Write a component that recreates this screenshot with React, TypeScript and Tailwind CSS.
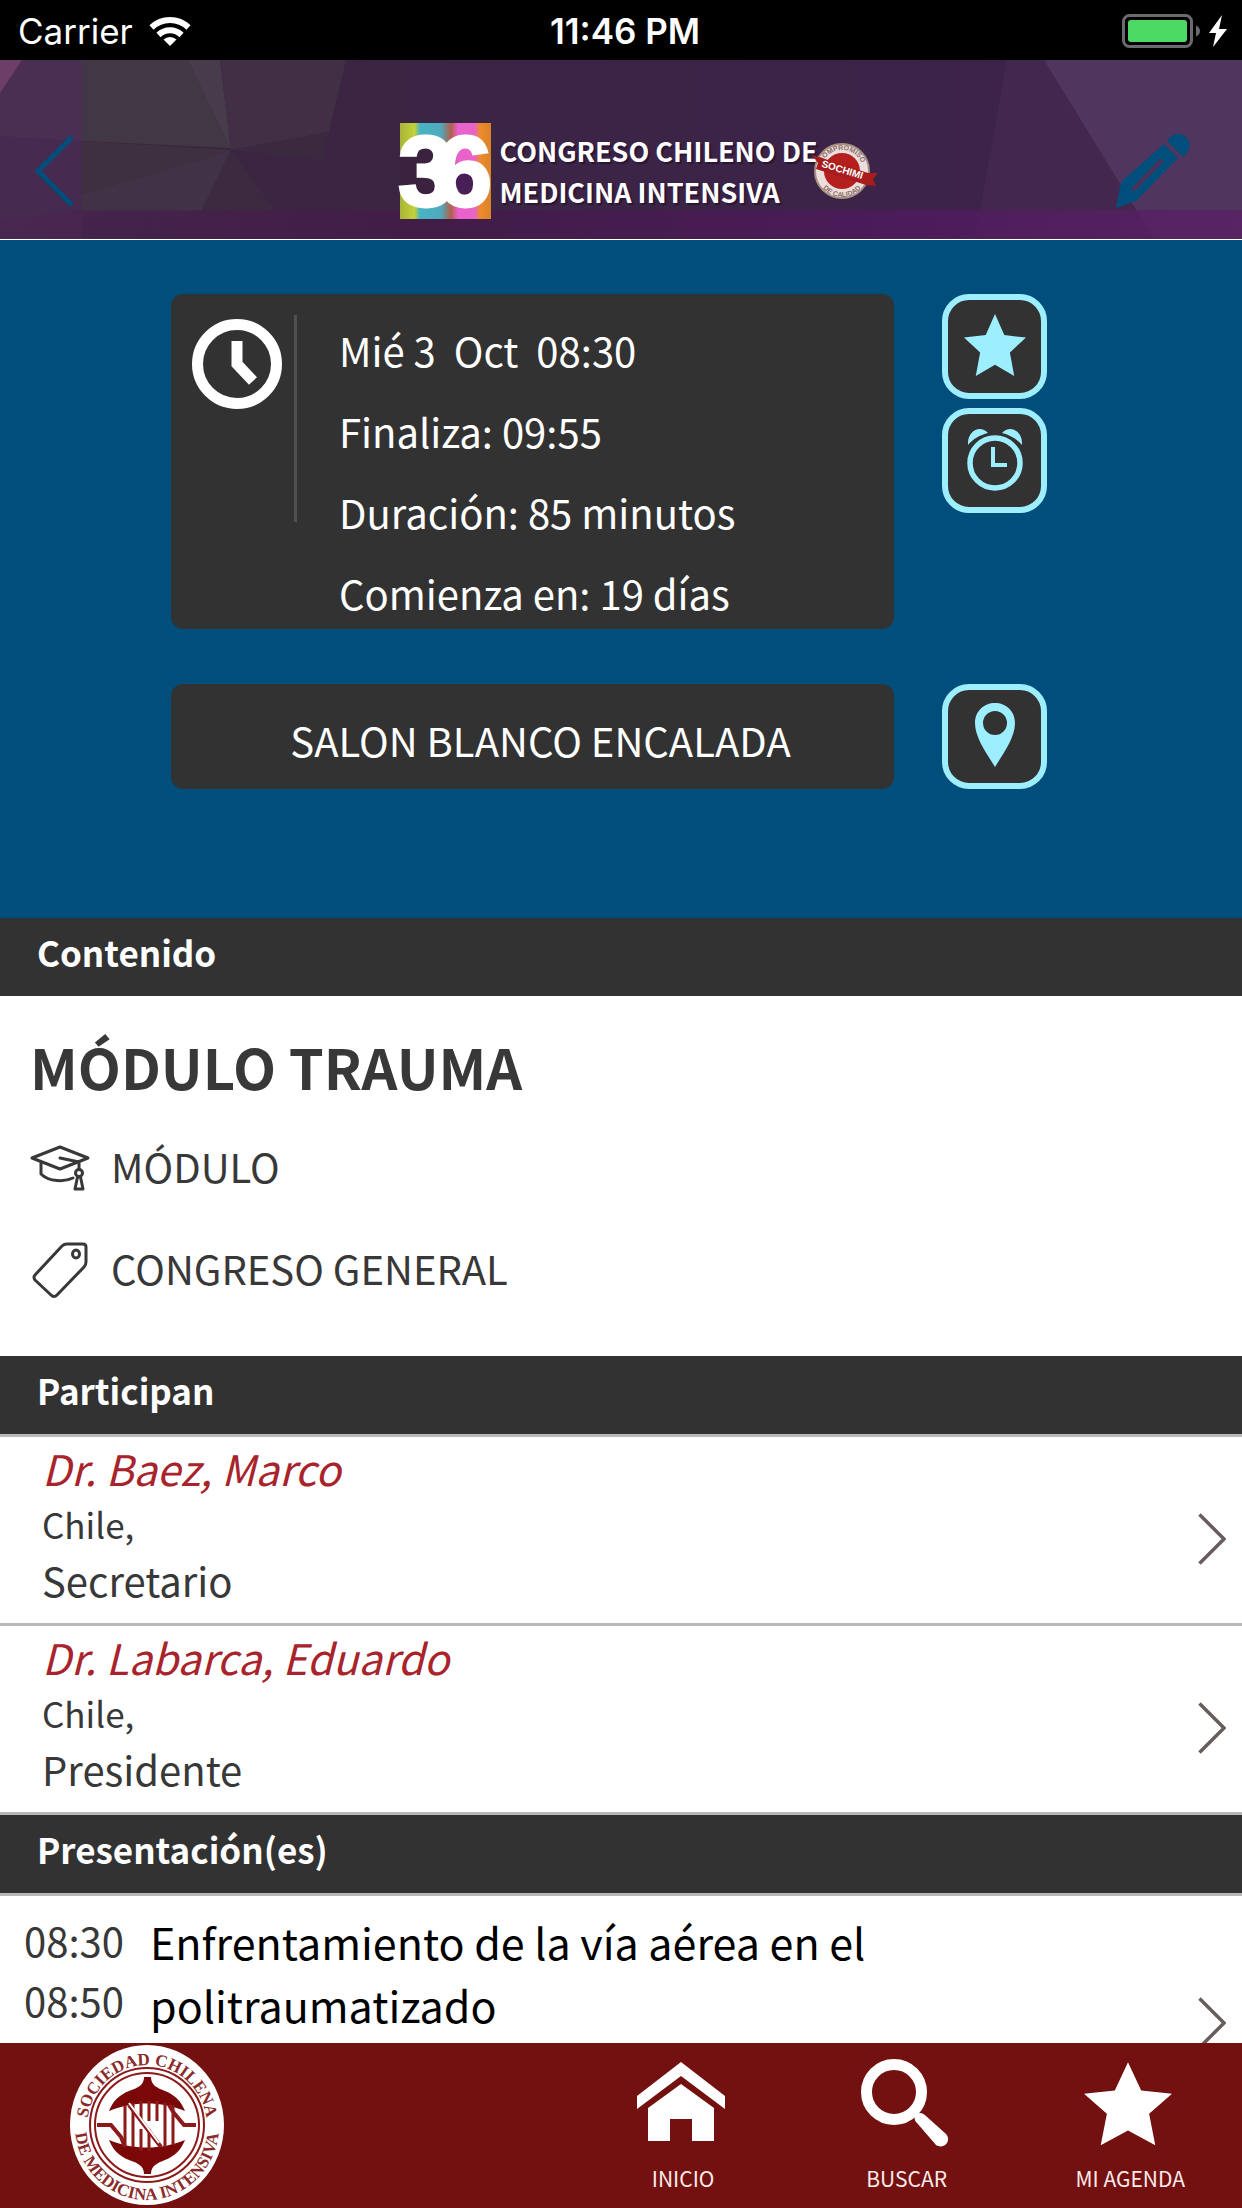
import type { ReactNode } from "react";

const participants = [
  { name: "Dr. Baez, Marco", country: "Chile,", role: "Secretario" },
  { name: "Dr. Labarca, Eduardo", country: "Chile,", role: "Presidente" },
];

const STAR = "50,0 65,34 100,38 74,62 81,100 50,82 19,100 26,62 0,38 35,34";

function StatusBar() {
  return (
    <div className="grid h-[60px] shrink-0 grid-cols-3 items-center bg-black pt-0.5 pr-[14px] pl-[18px] font-['Inter',sans-serif] text-[35px] text-white">
      <div className="flex items-center gap-4">
        <span>Carrier</span>
        <svg className="h-[30px] w-[42px]" viewBox="0 0 42 30" fill="none" stroke="#fff" strokeWidth="6">
          <path d="M2.500 11.500a26.500 26.500 0 0 1 37 0" />
          <path d="M9.500 19a16.500 16.500 0 0 1 23 0" />
          <path d="M21 30l-6.500-6.500a9.500 9.500 0 0 1 13 0z" fill="#fff" stroke="none" />
        </svg>
      </div>
      <span className="pl-1 text-center font-semibold">11:46 PM</span>
      <div className="flex items-center justify-end gap-2">
        <svg className="h-[34px] w-[78px]" viewBox="0 0 78 34">
          <rect x="1.500" y="1.500" width="68" height="31" rx="6" fill="none" stroke="#6d6a6f" strokeWidth="3" />
          <rect x="6" y="6" width="59" height="22" rx="3" fill="#4cd964" />
          <path d="M74 11.500q4 2 4 5.500t-4 5.500z" fill="#6d6a6f" />
        </svg>
        <svg className="h-[32px] w-[20px]" viewBox="0 0 20 32" fill="#fff">
          <path d="M14 0 1 18h7L5 32l14-18h-8z" />
        </svg>
      </div>
    </div>
  );
}

function HeaderBackground() {
  return (
    <svg className="absolute inset-0 size-full" viewBox="0 0 1242 179" preserveAspectRatio="none">
      <defs>
        <linearGradient id="mid" x1="0" x2="1">
          <stop offset="0" stopColor="#3a263f" />
          <stop offset="1" stopColor="#3d224d" />
        </linearGradient>
        <linearGradient id="band" x1="0" x2="1">
          <stop offset="0" stopColor="#482650" />
          <stop offset="0.350" stopColor="#421a48" />
          <stop offset="0.700" stopColor="#4d1a5c" />
          <stop offset="1" stopColor="#5a2164" />
        </linearGradient>
      </defs>
      <rect width="1242" height="179" fill="url(#mid)" />
      <path d="M0 0h82v179H0z" fill="#4b2f53" />
      <path d="M0 0h22L0 33z" fill="#6d3f68" />
      <path d="M0 76l82 5v98H0z" fill="#472a50" />
      <path d="M82 0h106l42 88L82 81z" fill="#423845" />
      <path d="M188 0h32l11 90z" fill="#483b4c" />
      <path d="M220 0h126l-17 72-98 18z" fill="#402f45" />
      <path d="M82 81l149 9-72 22-77 22z" fill="#3e3041" />
      <path d="M82 134l77-22 72-22-30 62H82z" fill="#413245" />
      <path d="M231 90l-30 62h75z" fill="#3c2b40" />
      <path d="M231 90l98-18-7 28z" fill="#3b2940" />
      <path d="M1007 0h37l110 179H975z" fill="#44274f" />
      <path d="M1044 0h198v179h-88z" fill="#50355f" />
      <path d="M82 150h1160v29H0v-20z" fill="url(#band)" opacity="0.800" />
    </svg>
  );
}

function Logo() {
  return (
    <div className="ml-[52px] flex items-center">
      <svg className="h-24 w-[91px] overflow-visible" viewBox="0 0 91 96">
        <defs>
          <linearGradient id="stripes" x1="0" x2="1">
            <stop offset="0" stopColor="#a9b43a" />
            <stop offset="0.160" stopColor="#c3d238" />
            <stop offset="0.220" stopColor="#47b4c4" />
            <stop offset="0.450" stopColor="#4fa9bb" />
            <stop offset="0.560" stopColor="#b0604a" />
            <stop offset="0.640" stopColor="#ea62cf" />
            <stop offset="0.820" stopColor="#e863c6" />
            <stop offset="0.880" stopColor="#ee8b2c" />
            <stop offset="1" stopColor="#d98329" />
          </linearGradient>
        </defs>
        <rect width="91" height="96" fill="url(#stripes)" />
        <path d="M0 30h17q3-8 11-8t11 8v36q-3 8-11 8t-11-8H0z" fill="#3b2340" />
        <ellipse cx="66" cy="59" rx="13" ry="15" fill="#4a1f58" />
        <text x="-2 36" y="83" fill="#fff" stroke="#fff" strokeWidth="3" fontFamily="Liberation Sans" fontWeight="700" fontSize="101">36</text>
      </svg>
      <div className="w-[321px] pl-[9px] text-[27px] leading-[41px] font-bold whitespace-nowrap text-white text-shadow-[2px_2px_1px_#2a1535]">
        <div>CONGRESO CHILENO DE</div>
        <div>MEDICINA INTENSIVA</div>
      </div>
      <svg className="h-[60px] w-[66px]" viewBox="0 0 66 60">
        <circle cx="30" cy="30" r="27" fill="#eadfdc" stroke="#a98f80" strokeWidth="2" />
        <circle cx="30" cy="30" r="18" fill="#b5201f" />
        <path id="sealTop" d="M9 30a21 21 0 0 1 42 0" fill="none" />
        <path id="sealBottom" d="M5 31a25 25 0 0 0 50 0" fill="none" />
        <g fontFamily="Liberation Sans" fontSize="7" fontWeight="700" fill="#8a6a66" textAnchor="middle">
          <text><textPath href="#sealTop" startOffset="50%">COMPROMISO</textPath></text>
          <text><textPath href="#sealBottom" startOffset="50%">DE CALIDAD</textPath></text>
        </g>
        <path d="M0 14l7 2 49 16 10 0-5 6 3 7-10-1L4 28l2-6z" fill="#a81c1c" />
        <text x="30" y="32" transform="rotate(17 30 30)" textAnchor="middle" fontFamily="Liberation Sans" fontSize="10" fontWeight="700" fill="#fff">SOCHIMI</text>
      </svg>
    </div>
  );
}

function Header() {
  return (
    <header className="relative h-[180px] shrink-0 border-b border-white">
      <HeaderBackground />
      <div className="relative grid h-full grid-cols-[1fr_auto_1fr] items-center pt-[46px] pr-[51px] pb-1 pl-[34px]">
        <button aria-label="Volver" className="w-[76px]">
          <svg className="h-[72px] w-10" viewBox="0 0 40 72" fill="none" stroke="#004e7c" strokeWidth="5">
            <path d="M38 2 4 36l34 34" />
          </svg>
        </button>
        <Logo />
        <button aria-label="Editar" className="justify-self-end">
          <svg className="size-[76px]" viewBox="0 0 76 76" fill="#004e7c">
            <path d="M1 75 6 49 49 11l14 14-42 43z" />
            <path d="M52 8c5-8 14-9 19-4s5 14-3 20z" />
            <path d="M18 57 47 27" stroke="#4e3059" strokeWidth="4" />
          </svg>
        </button>
      </div>
    </header>
  );
}

function ActionButton({ label, children }: { label: string; children: ReactNode }) {
  return (
    <button aria-label={label} className="flex size-[105px] items-center justify-center rounded-[27px] border-6 border-[#9deeff] bg-[#323232] pb-1">
      {children}
    </button>
  );
}

function SectionTitle({ children }: { children: ReactNode }) {
  return (
    <h2 className="flex h-[78px] items-center bg-[#323232] pb-2.5 pl-[37px] text-[35px] leading-[50px] font-bold text-white">{children}</h2>
  );
}

function Arrow() {
  return (
    <svg className="h-[52px] w-7 shrink-0" viewBox="0 0 28 52" fill="none" stroke="#685c5c" strokeWidth="3.500">
      <path d="M1.500 1.500 26 26 1.500 50.500" />
    </svg>
  );
}

function Summary() {
  return (
    <section className="bg-[#004e7c] pt-[54px] pr-[195px] pb-[129px] pl-[171px] text-[40px] leading-[60px] text-white">
      <div className="flex gap-12">
        <div className="flex flex-1 rounded-xl bg-[#323232] pt-[21px] pb-[6px] pl-[21px]">
          <svg className="mt-1 size-[90px]" viewBox="0 0 90 90" fill="none" stroke="#fff" strokeWidth="11">
            <circle cx="45" cy="45" r="39.500" />
            <path d="M45 22v23l16 17" />
          </svg>
          <div className="ml-3 h-[207px] w-[3px] bg-[#505050]" />
          <div className="ml-[42px] flex flex-col gap-[21px] pt-[5px]">
            <p className="whitespace-pre">Mié 3  Oct  08:30</p>
            <p>Finaliza: 09:55</p>
            <p>Duración: 85 minutos</p>
            <p>Comienza en: 19 días</p>
          </div>
        </div>
        <div className="flex flex-col gap-[9px]">
          <ActionButton label="Agregar a mi agenda">
            <svg className="size-[62px]" viewBox="0 0 100 100" fill="#9deeff">
              <polygon points={STAR} />
            </svg>
          </ActionButton>
          <ActionButton label="Alarma">
            <svg className="h-[64px] w-[56px]" viewBox="0 0 56 64" fill="none" stroke="#9deeff">
              <circle cx="28" cy="36" r="25" strokeWidth="5.500" />
              <path d="M26 20v18h14" strokeWidth="4" />
              <path d="M1 18C0 4 13-3 21 6 13 8 6 12 1 18zM55 18C56 4 43-3 35 6c8 2 15 6 20 12z" fill="#9deeff" stroke="none" />
            </svg>
          </ActionButton>
        </div>
      </div>
      <div className="mt-[55px] flex gap-12">
        <div className="flex flex-1 items-center justify-center rounded-xl bg-[#323232] pt-1.5 pl-4">SALON BLANCO ENCALADA</div>
        <ActionButton label="Ubicación">
          <svg className="h-[64px] w-10" viewBox="0 0 40 64" fill="#9deeff">
            <path fillRule="evenodd" d="M20 0C9 0 0 8 0 20c0 14 10 28 20 44 10-16 20-30 20-44C40 8 31 0 20 0zm0 8a12 12 0 1 1 0 24 12 12 0 0 1 0-24z" />
          </svg>
        </ActionButton>
      </div>
    </section>
  );
}

function Footer() {
  return (
    <footer className="flex h-[165px] shrink-0 justify-between bg-[#731010]">
      <svg className="ml-[69px] h-[162px] w-[156px]" viewBox="0 0 156 162" fill="none">
        <ellipse cx="78" cy="82" rx="77" ry="80" fill="#fff" />
        <path id="ringTop" d="M18 84a60 62 0 0 1 120 0" />
        <path id="ringBottom" d="M6 82a72 75 0 0 0 144 0" />
        <g fontFamily="Liberation Serif" fontSize="17" fontWeight="700" fill="#8a2a2a" textAnchor="middle">
          <text><textPath href="#ringTop" startOffset="50%">SOCIEDAD CHILENA</textPath></text>
          <text><textPath href="#ringBottom" startOffset="50%">DE MEDICINA INTENSIVA</textPath></text>
        </g>
        <g stroke="#8c1a1a" strokeWidth="2">
          <ellipse cx="78" cy="82" rx="57" ry="57" />
          <ellipse cx="78" cy="82" rx="52" ry="52" />
        </g>
        <path d="M75 34h7c0 8 6 11 14 14 10 4 16 10 20 20-24-10-52-10-76 0 4-10 10-16 20-20 9-3 15-6 15-14zM75 131h7c0-8 6-11 14-14 10-4 16-10 20-20-24 10-52 10-76 0 4 10 10 16 20 20 9 3 15 6 15 14z" fill="#7a0808" />
        <g stroke="#8c1a1a" strokeWidth="3">
          <path d="M56 62v40M64 60v44M72 58v20M72 86v22M80 58v20M80 86v22M88 58v20M96 60v44M104 62v40" />
          <path d="M28 82h14l10 12 4 10M127 82h-12l-10-12-5-8M60 62l32 42" strokeWidth="4" />
          <path d="M60 60l30 40" stroke="#fff" strokeWidth="2" />
        </g>
      </svg>
      <nav className="grid w-[54%] grid-cols-3 text-[21px] leading-[30px] text-[#fdeaea]">
        <a href="#inicio" className="flex flex-col items-center gap-4 pt-4">
          <svg className="mr-1 size-[88px]" viewBox="0 0 88 88" fill="#fff">
            <path d="M44 3 88 37v13L44 17 0 50V37z" />
            <path d="M44 25 77 49v33H55V60H33v22H11V49z" />
          </svg>
          <span>INICIO</span>
        </a>
        <a href="#buscar" className="flex flex-col items-center gap-4 pt-4">
          <svg className="mr-1 size-[88px]" viewBox="0 0 88 88" fill="none" stroke="#fff">
            <circle cx="33" cy="33" r="27.500" strokeWidth="11" />
            <path d="M54 57c3-4 7-4 11 0l20 18c6 7-2 16-10 11L56 64c-2-2-3-4-2-7z" fill="#fff" stroke="none" />
          </svg>
          <span>BUSCAR</span>
        </a>
        <a href="#agenda" className="flex flex-col items-center gap-4 pt-4">
          <svg className="mr-1 size-[88px]" viewBox="0 -4 100 106" preserveAspectRatio="none" fill="#fff">
            <polygon points={STAR} />
          </svg>
          <span>MI AGENDA</span>
        </a>
      </nav>
    </footer>
  );
}

export default function App() {
  return (
    <div className="flex h-screen flex-col bg-white font-['Noto_Sans_CJK_SC',sans-serif] text-[#383838]">
      <StatusBar />
      <Header />
      <main className="min-h-0 flex-1 overflow-hidden">
        <Summary />
        <SectionTitle>Contenido</SectionTitle>
        <section className="px-[30px] pt-[30px] pb-[58px] text-[40px] leading-[60px]">
          <h1 className="text-[56px] leading-[80px] font-bold">MÓDULO TRAUMA</h1>
          <div className="mt-[30px] flex items-center gap-[21px]">
            <svg className="mt-1 h-[46px] w-[60px]" viewBox="0 0 60 46" fill="none" stroke="#383838" strokeWidth="3" strokeLinejoin="round" strokeLinecap="round">
              <path d="M2 13 30 2l28 11-28 11z" />
              <path d="M30 13l19 4v7M11 17v12c8 8 24 8 32 4" />
              <circle cx="49" cy="28" r="3.500" />
              <path d="M47.500 32 45 44h8l-2.500-12z" />
            </svg>
            <span>MÓDULO</span>
          </div>
          <div className="mt-[42px] flex items-center gap-[21px]">
            <svg className="mt-1 h-[56px] w-[60px]" viewBox="0 0 60 56" fill="none" stroke="#383838" strokeWidth="3" strokeLinejoin="round">
              <path d="M37 2h16q3 0 3 3v15q0 3-2 5L27 53q-3 3-6 0L5 38q-2-3 0-5L32 4q2-2 5-2z" />
              <ellipse cx="46" cy="12" rx="3.500" ry="4" />
            </svg>
            <span>CONGRESO GENERAL</span>
          </div>
        </section>
        <SectionTitle>Participan</SectionTitle>
        {participants.map((p) => (
          <a key={p.name} href="#participante" className="flex items-center justify-between border-t-3 border-[#b8b8b8] pr-4 pl-[42px]">
            <div className="pt-[3px] pb-[15px] text-[40px] leading-[56px]">
              <p className="text-[42px] text-[#a8232b] italic">{p.name}</p>
              <p className="text-[35px]">{p.country}</p>
              <p>{p.role}</p>
            </div>
            <div className="pt-[18px]">
              <Arrow />
            </div>
          </a>
        ))}
        <div className="border-y-3 border-[#b8b8b8]">
          <SectionTitle>Presentación(es)</SectionTitle>
        </div>
        <a href="#presentacion" className="flex min-h-[236px] pt-[14px] pr-4 pl-6">
          <div className="w-[126px] shrink-0 text-[40px] leading-[60px]">
            <p>08:30</p>
            <p>08:50</p>
          </div>
          <p className="w-[780px] text-[43px] leading-[63px] text-black">Enfrentamiento de la vía aérea en el politraumatizado</p>
          <div className="ml-auto self-center pt-1">
            <Arrow />
          </div>
        </a>
      </main>
      <Footer />
    </div>
  );
}
